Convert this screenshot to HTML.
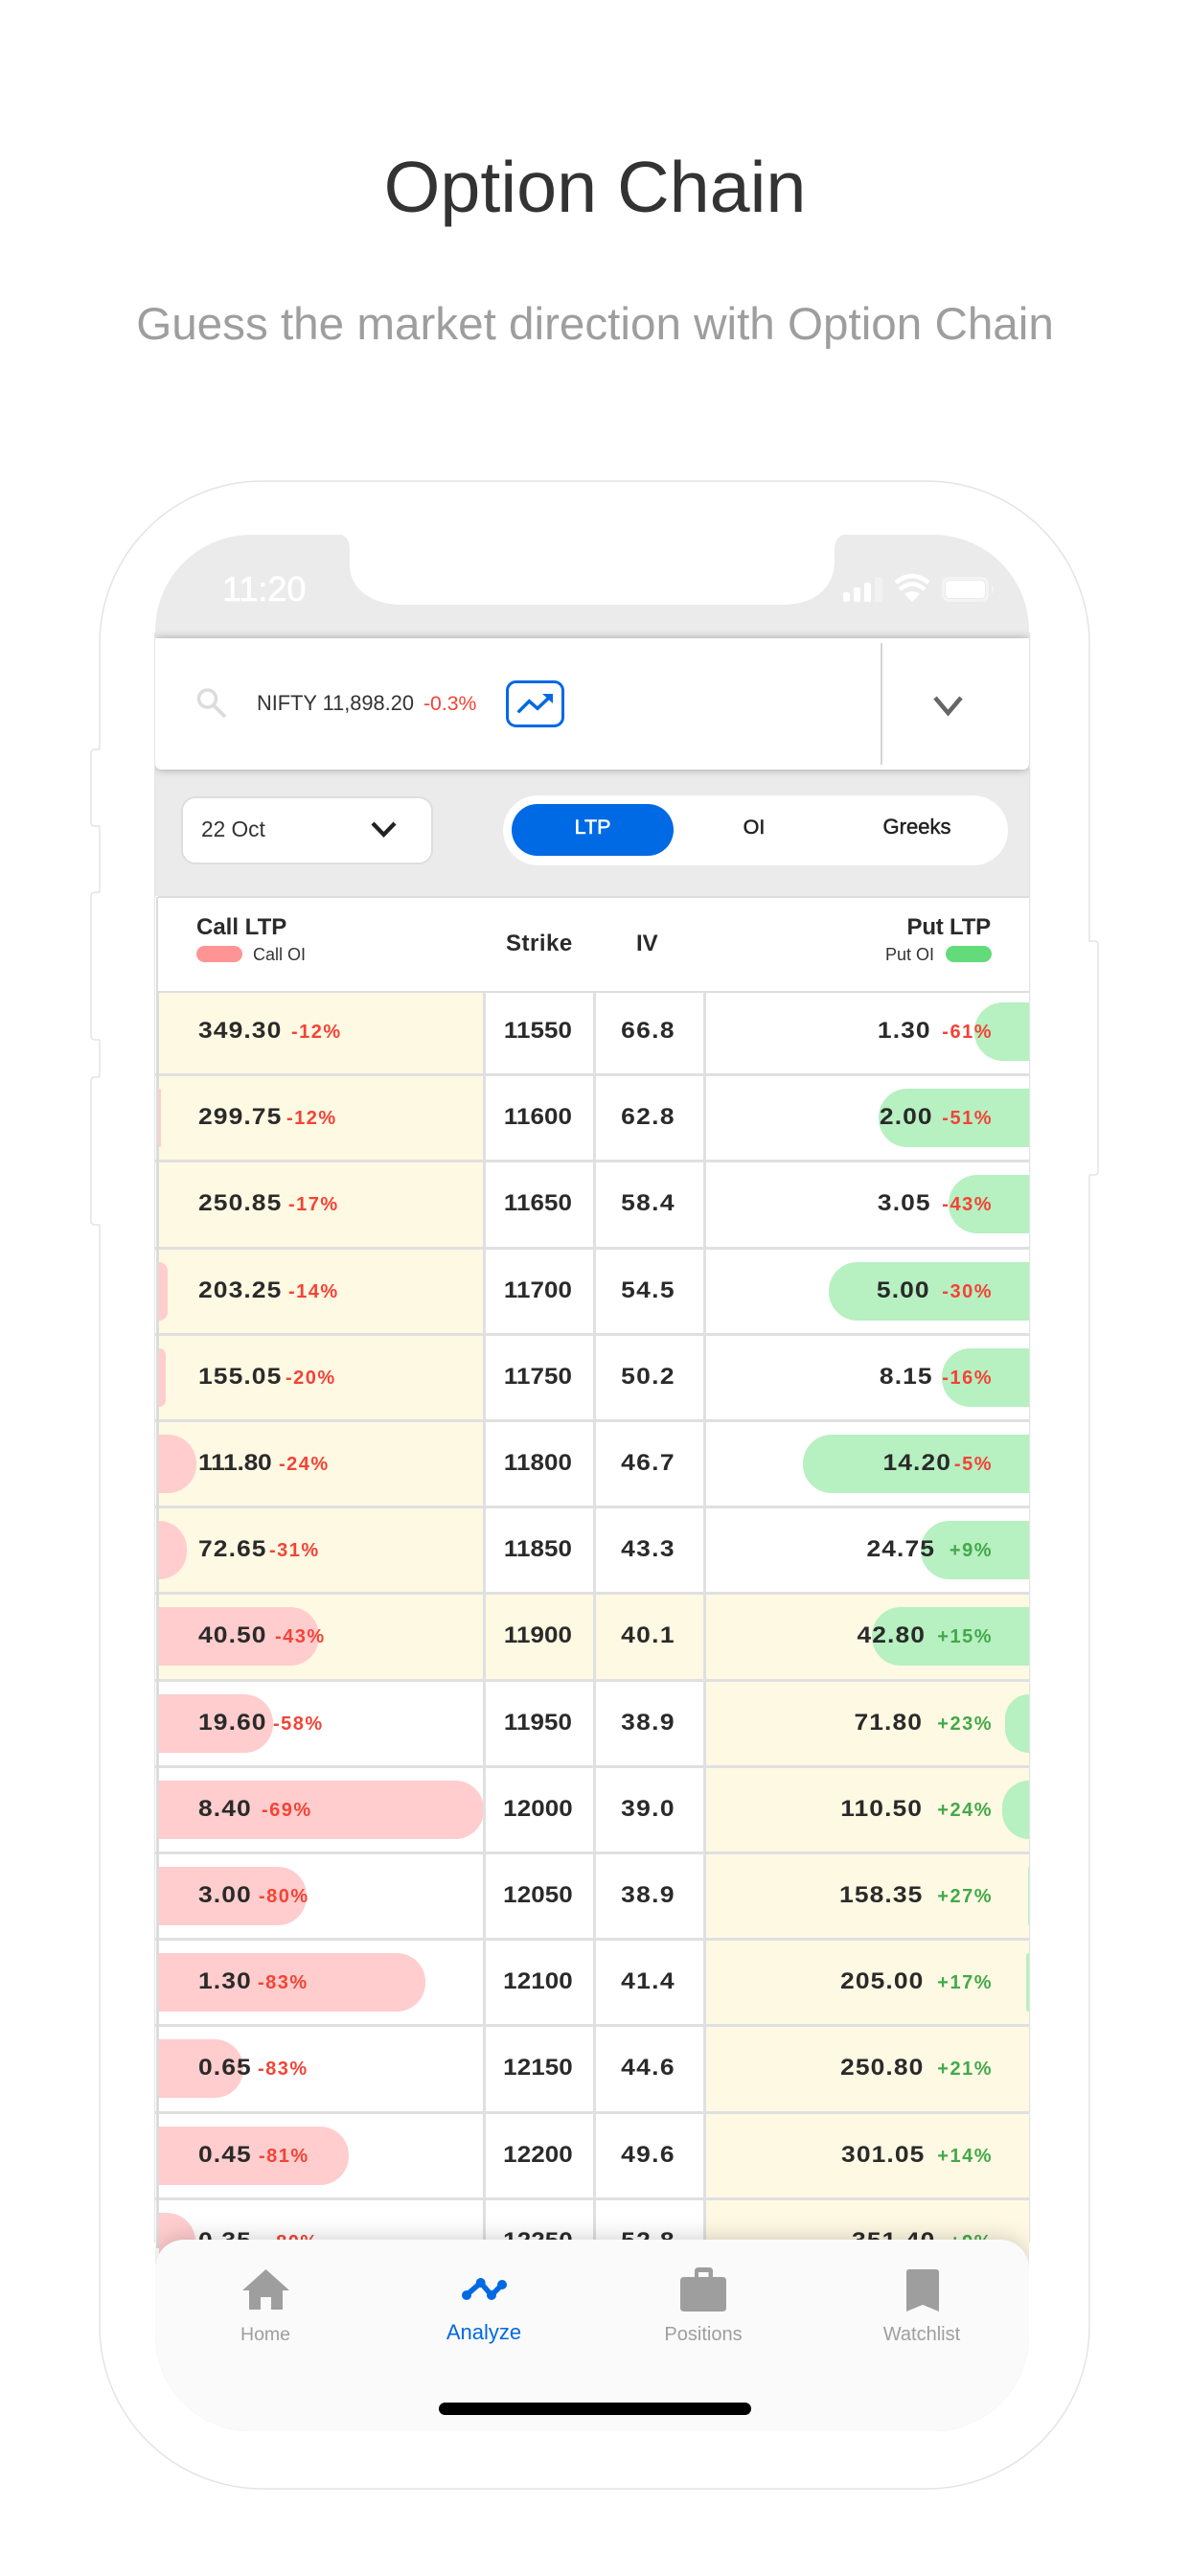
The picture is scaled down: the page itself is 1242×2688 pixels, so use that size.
<!DOCTYPE html>
<html lang="en"><head><meta charset="utf-8"><title>Option Chain</title>
<style>
html,body{margin:0;padding:0;background:#fff}
body{position:relative;width:1242px;height:2688px;overflow:hidden;font-family:"Liberation Sans",sans-serif;color:#222}
div,span{position:absolute;white-space:nowrap}
#screen{left:162px;top:558px;width:912px;height:1979px;border-radius:100px;overflow:hidden;background:#ebebeb}
#in{left:-162px;top:-558px;width:1242px;height:2688px}
.r{left:0;width:1242px;height:91px}
.sep{left:162px;width:912px;top:-1px;height:2.5px;background:#e0e0e0;z-index:3}
.y1,.y2,.y3{top:0;height:91px;background:#fef9e3}
.y1{left:166px;width:338px}.y2{left:505px;width:229px}.y3{left:735px;width:339px}
.c,.g{top:15px;height:61px;background:#ffcdcd;left:166px;border-radius:0 30px 30px 0}
.g{background:#b7f0c1;right:168px;border-radius:30px 0 0 30px}
.p,.s,.v,.q,.pc,.pg{top:-1px;line-height:91px;font-size:24px;font-weight:700;color:#2a2a2a;z-index:2}
.p{left:207px;letter-spacing:1px;transform:scaleX(1.1);transform-origin:0 50%}
.q{letter-spacing:1px;margin-right:-1px;transform:scaleX(1.1);transform-origin:100% 50%}
.s{left:504px;width:115px;text-align:center;letter-spacing:.1px;transform:scaleX(1.08)}
.v{left:619px;width:115px;text-align:center;letter-spacing:1.2px;transform:scaleX(1.1)}
.pc,.pg{top:1px;font-size:20px;letter-spacing:1.5px;color:#f44336}
.pg{color:#43a94a;right:206px}
.pr{right:206px}
.col{top:1036px;height:1302px;width:2.5px;background:#e0e0e0;z-index:3}
.h{font-size:24px;font-weight:700;color:#2a2a2a;line-height:28px}
.tl{font-size:20px;text-align:center;line-height:24px;color:#9e9e9e}
</style></head><body>

<svg style="position:absolute;left:0;top:0" width="1242" height="2688" viewBox="0 0 1242 2688">
<rect x="104" y="502" width="1033" height="2095" rx="170" ry="170" fill="#fff" stroke="#e4e4e4" stroke-width="1.5"/>
<g fill="#fff" stroke="none"><rect x="97" y="782" width="9" height="80"/><rect x="97" y="931" width="9" height="154"/><rect x="97" y="1124" width="9" height="154"/><rect x="1135" y="982" width="9" height="244"/></g>
<g fill="none" stroke="#e4e4e4" stroke-width="1.5">
<path d="M104 782H99Q95 782 95 786V858Q95 862 99 862H104"/>
<path d="M104 931H99Q95 931 95 935V1081Q95 1085 99 1085H104"/>
<path d="M104 1124H99Q95 1124 95 1128V1274Q95 1278 99 1278H104"/>
<path d="M1137 982H1142Q1146 982 1146 986V1222Q1146 1226 1142 1226H1137"/>
<path d="M161.7 660V2340M1074.5 660V2340"/>
</g>
</svg>

<div style="left:0;width:1242px;top:151px;text-align:center;font-size:75.5px;line-height:88px;color:#333">Option Chain</div>
<div style="left:0;width:1242px;top:311px;text-align:center;font-size:47.6px;line-height:56px;color:#9e9e9e">Guess the market direction with Option Chain</div>

<div id="screen"><div id="in">
<svg style="position:absolute;left:0;top:0;z-index:1" width="1242" height="700" viewBox="0 0 1242 700">
<path d="M345 556H350Q365 558 365 573V590C365 612 385 631 420 631H816C852 631 871 612 871 585V573Q871 558 887 556H892V550H345Z" fill="#fff"/>
<g fill="#fff"><rect x="880" y="618" width="7" height="10" rx="2"/><rect x="891" y="613" width="7" height="15" rx="2"/><rect x="902" y="608" width="7" height="20" rx="2"/><rect x="913" y="602" width="8" height="26" rx="2" opacity=".35"/>
<path d="M952 628L944 620Q952 614 960 620Z"/>
<path d="M939 615Q952 604 965 615" fill="none" stroke="#fff" stroke-width="4.5"/>
<path d="M935 608Q952 594 969 608" fill="none" stroke="#fff" stroke-width="4.5"/>
<rect x="987" y="606" width="41" height="18" rx="4"/>
<rect x="984.5" y="603.5" width="46" height="23" rx="6" fill="none" stroke="#fff" stroke-opacity=".45" stroke-width="3"/>
<path d="M1035 610Q1039 615 1035 620Z" opacity=".45"/></g>
</svg>
<div style="left:232px;top:594px;font-size:36px;line-height:42px;color:#fff;-webkit-text-stroke:.6px #fff;z-index:2">11:20</div>

<div style="left:162px;top:666px;width:912px;height:137px;background:#fff;border-radius:0 0 6px 6px;box-shadow:0 0 9px rgba(0,0,0,.32);z-index:2"></div>
<div style="left:919px;top:671px;width:2px;height:127px;background:#d5d5d5;z-index:3"></div>
<svg style="position:absolute;left:0;top:660px;z-index:3" width="1242" height="140" viewBox="0 660 1242 140">
<circle cx="216.500" cy="729" r="9" fill="none" stroke="#dcdcdc" stroke-width="3.500"/>
<path d="M223 736L235 748" stroke="#dcdcdc" stroke-width="4" fill="none"/>
<rect x="529.500" y="711.500" width="58" height="46" rx="9" fill="none" stroke="#0069e4" stroke-width="3"/>
<path d="M540.700 743.300L552.300 731.700L561 739.300L575 726" fill="none" stroke="#0069e4" stroke-width="3.500"/>
<path d="M566 724H577V734Z" fill="#0069e4"/>
<path d="M976 728L989.500 744L1003 728" fill="none" stroke="#666" stroke-width="4.500"/>
</svg>
<div style="left:268px;top:721px;font-size:21.8px;line-height:26px;color:#333;z-index:3">NIFTY 11,898.20</div>
<div style="left:442px;top:722px;font-size:21.2px;line-height:26px;color:#f44336;z-index:3">-0.3%</div>

<div style="left:189px;top:831px;width:259px;height:67px;background:#fff;border:2.5px solid #dedede;border-radius:15px"></div>
<div style="left:210px;top:852px;font-size:22.7px;line-height:27px;color:#333">22 Oct</div>
<svg style="position:absolute;left:380px;top:850px" width="40" height="30" viewBox="380 850 40 30"><path d="M389 859L400.500 871L412 859" fill="none" stroke="#222" stroke-width="4.200"/></svg>
<div style="left:525px;top:830px;width:527px;height:73px;border-radius:37px;background:#fff"></div>
<div style="left:534px;top:839px;width:169px;height:54px;border-radius:27px;background:#0069e4"></div>
<div style="left:534px;width:169px;top:850px;text-align:center;font-size:21.5px;line-height:26px;color:#fff;-webkit-text-stroke:.5px #fff">LTP</div>
<div style="left:703px;width:168px;top:850px;text-align:center;font-size:21.5px;line-height:26px;color:#222;-webkit-text-stroke:.5px #222">OI</div>
<div style="left:873px;width:168px;top:850px;text-align:center;font-size:22px;line-height:26px;color:#222;-webkit-text-stroke:.5px #222">Greeks</div>

<div style="left:162px;top:935px;width:912px;height:1450px;background:#fff"></div>
<div style="left:163px;top:936px;width:2.5px;height:1410px;background:#dcdcdc;z-index:4"></div>

<div class="r" style="top:1031px"><div class="y1"></div><div class="g" style="left:1017px"></div>
<span class="p">349.30</span><span class="pc" style="left:304px">-12%</span><span class="s">11550</span><span class="v">66.8</span><span class="q" style="right:271px">1.30</span><span class="pc pr">-61%</span></div>

<div class="r" style="top:1121px"><div class="sep"></div><div class="y1"></div><div class="c" style="width:2px"></div><div class="g" style="left:917px"></div>
<span class="p">299.75</span><span class="pc" style="left:299px">-12%</span><span class="s">11600</span><span class="v">62.8</span><span class="q" style="right:269px">2.00</span><span class="pc pr">-51%</span></div>

<div class="r" style="top:1211px"><div class="sep"></div><div class="y1"></div><div class="g" style="left:990px"></div>
<span class="p">250.85</span><span class="pc" style="left:301px">-17%</span><span class="s">11650</span><span class="v">58.4</span><span class="q" style="right:271px">3.05</span><span class="pc pr">-43%</span></div>

<div class="r" style="top:1302px"><div class="sep"></div><div class="y1"></div><div class="c" style="width:9px"></div><div class="g" style="left:865px"></div>
<span class="p">203.25</span><span class="pc" style="left:301px">-14%</span><span class="s">11700</span><span class="v">54.5</span><span class="q" style="right:272px">5.00</span><span class="pc pr">-30%</span></div>

<div class="r" style="top:1392px"><div class="sep"></div><div class="y1"></div><div class="c" style="width:7px"></div><div class="g" style="left:983px"></div>
<span class="p">155.05</span><span class="pc" style="left:298px">-20%</span><span class="s">11750</span><span class="v">50.2</span><span class="q" style="right:269px">8.15</span><span class="pc pr">-16%</span></div>

<div class="r" style="top:1482px"><div class="sep"></div><div class="y1"></div><div class="c" style="width:39px"></div><div class="g" style="left:838px"></div>
<span class="p" style="letter-spacing:-.2px">111.80</span><span class="pc" style="left:291px">-24%</span><span class="s">11800</span><span class="v">46.7</span><span class="q" style="right:250px">14.20</span><span class="pc pr">-5%</span></div>

<div class="r" style="top:1572px"><div class="sep"></div><div class="y1"></div><div class="c" style="width:29px"></div><div class="g" style="left:961px"></div>
<span class="p">72.65</span><span class="pc" style="left:281px">-31%</span><span class="s">11850</span><span class="v">43.3</span><span class="q" style="right:267px">24.75</span><span class="pc pg">+9%</span></div>

<div class="r" style="top:1662px"><div class="sep"></div><div class="y1"></div><div class="y2"></div><div class="y3"></div><div class="c" style="width:167px"></div><div class="g" style="left:910px"></div>
<span class="p">40.50</span><span class="pc" style="left:287px">-43%</span><span class="s">11900</span><span class="v">40.1</span><span class="q" style="right:277px">42.80</span><span class="pc pg">+15%</span></div>

<div class="r" style="top:1753px"><div class="sep"></div><div class="y3"></div><div class="c" style="width:119px"></div><div class="g" style="left:1049px"></div>
<span class="p">19.60</span><span class="pc" style="left:285px">-58%</span><span class="s">11950</span><span class="v">38.9</span><span class="q" style="right:280px">71.80</span><span class="pc pg">+23%</span></div>

<div class="r" style="top:1843px"><div class="sep"></div><div class="y3"></div><div class="c" style="width:339px"></div><div class="g" style="left:1046px"></div>
<span class="p">8.40</span><span class="pc" style="left:273px">-69%</span><span class="s">12000</span><span class="v">39.0</span><span class="q" style="right:280px">110.50</span><span class="pc pg">+24%</span></div>

<div class="r" style="top:1933px"><div class="sep"></div><div class="y3"></div><div class="c" style="width:154px"></div><div class="g" style="left:1073px"></div>
<span class="p">3.00</span><span class="pc" style="left:270px">-80%</span><span class="s">12050</span><span class="v">38.9</span><span class="q" style="right:280px">158.35</span><span class="pc pg">+27%</span></div>

<div class="r" style="top:2023px"><div class="sep"></div><div class="y3"></div><div class="c" style="width:278px"></div><div class="g" style="left:1071px"></div>
<span class="p">1.30</span><span class="pc" style="left:269px">-83%</span><span class="s">12100</span><span class="v">41.4</span><span class="q" style="right:279px">205.00</span><span class="pc pg">+17%</span></div>

<div class="r" style="top:2113px"><div class="sep"></div><div class="y3"></div><div class="c" style="width:88px"></div>
<span class="p">0.65</span><span class="pc" style="left:269px">-83%</span><span class="s">12150</span><span class="v">44.6</span><span class="q" style="right:279px">250.80</span><span class="pc pg">+21%</span></div>

<div class="r" style="top:2204px"><div class="sep"></div><div class="y3"></div><div class="c" style="width:198px"></div>
<span class="p">0.45</span><span class="pc" style="left:270px">-81%</span><span class="s">12200</span><span class="v">49.6</span><span class="q" style="right:278px">301.05</span><span class="pc pg">+14%</span></div>

<div class="r" style="top:2294px"><div class="sep"></div><div class="y3"></div><div class="c" style="width:38px"></div>
<span class="p">0.35</span><span class="pc" style="left:280px">-80%</span><span class="s">12250</span><span class="v">52.8</span><span class="q" style="right:267px">351.40</span><span class="pc pg">+9%</span></div>

<div class="col" style="left:504px"></div><div class="col" style="left:619px"></div><div class="col" style="left:734px"></div>

<div style="left:165px;top:935px;width:909px;height:96.5px;background:#fff;border-top:2.5px solid #dedede;border-bottom:2.5px solid #dedede;z-index:5"></div>
<div style="left:0;top:0;width:1242px;height:1036px;z-index:6">
<span class="h" style="left:205px;top:954px">Call LTP</span>
<div style="left:205px;top:987px;width:48px;height:17px;border-radius:9px;background:#ff9494"></div>
<span style="left:264px;top:985px;font-size:18px;line-height:22px;color:#333">Call OI</span>
<span class="h" style="left:528px;top:971px;letter-spacing:.5px">Strike</span>
<span class="h" style="left:664px;top:971px">IV</span>
<span class="h" style="right:208px;top:954px;letter-spacing:-.2px">Put LTP</span>
<span style="left:924px;top:985px;font-size:18px;line-height:22px;color:#333">Put OI</span>
<div style="left:987px;top:987px;width:48px;height:17px;border-radius:9px;background:#63db7b"></div>
</div>

<div style="left:162px;top:2337px;width:912px;height:200px;background:#fafafa;border-radius:30px 30px 100px 100px;box-shadow:0 -3px 22px rgba(0,0,0,.17);z-index:8"></div>
<svg style="position:absolute;left:0;top:2340px;z-index:9" width="1242" height="200" viewBox="0 2340 1242 200">
<path d="M277.500 2368L302 2390H295V2410H283V2397H272V2410H260V2390H253Z" fill="#9e9e9e"/>
<path d="M486.700 2395L501.700 2382L513 2395L524 2384" fill="none" stroke="#0069e4" stroke-width="5.500"/>
<g fill="#0069e4"><circle cx="487" cy="2395" r="5"/><circle cx="501.700" cy="2382" r="5"/><circle cx="513" cy="2395" r="5"/><circle cx="524" cy="2384" r="5"/></g>
<path fill-rule="evenodd" d="M729 2366H740Q744 2366 744 2370V2376H754Q758 2376 758 2380V2408Q758 2412 754 2412H714Q710 2412 710 2408V2380Q710 2376 714 2376H725V2370Q725 2366 729 2366ZM729 2371V2376H739.500V2371Z" fill="#9e9e9e"/>
<path d="M949 2368H977Q980 2368 980 2371V2412L963 2405L946 2412V2371Q946 2368 949 2368Z" fill="#9e9e9e"/>
<rect x="458" y="2507" width="326" height="13" rx="6.500" fill="#000"/>
</svg>
<div class="tl" style="left:227px;width:100px;top:2424px;font-size:19.5px;z-index:10">Home</div>
<div class="tl" style="left:445px;width:120px;top:2421px;font-size:22px;line-height:26px;color:#0069e4;z-index:10">Analyze</div>
<div class="tl" style="left:674px;width:120px;top:2424px;z-index:10">Positions</div>
<div class="tl" style="left:902px;width:120px;top:2424px;z-index:10">Watchlist</div>
</div></div>
</body></html>
